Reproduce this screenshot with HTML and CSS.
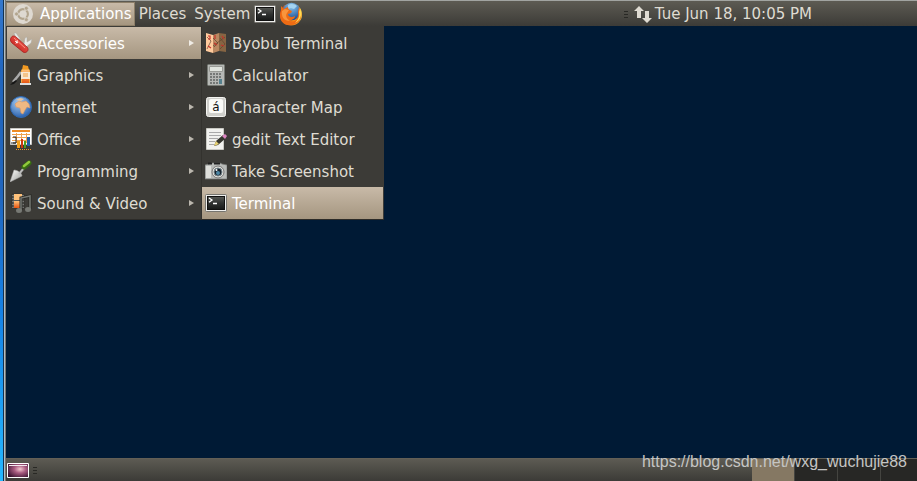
FILE: index.html
```html
<!DOCTYPE html>
<html lang="en">
<head>
<meta charset="utf-8">
<title>Desktop</title>
<link rel="stylesheet" href="styles.css">
</head>
<body>
<svg width="0" height="0" class="defs" aria-hidden="true">
  <defs>
    <linearGradient id="screen" x1="0" y1="0" x2="0" y2="1"><stop offset="0" stop-color="#555753"/><stop offset=".5" stop-color="#303231"/><stop offset="1" stop-color="#171918"/></linearGradient>
    <linearGradient id="orange" x1="0" y1="0" x2="0" y2="1"><stop offset="0" stop-color="#ffc27a"/><stop offset="1" stop-color="#e85410"/></linearGradient>
    <linearGradient id="steel" x1="0" y1="0" x2="1" y2="1"><stop offset="0" stop-color="#fff"/><stop offset="1" stop-color="#999b96"/></linearGradient>
    <linearGradient id="red" x1="1" y1="0" x2="0" y2="1"><stop offset="0" stop-color="#ff7465"/><stop offset="1" stop-color="#b60b0b"/></linearGradient>
    <radialGradient id="globe" cx=".4" cy=".3" r=".7"><stop offset="0" stop-color="#a9d0f5"/><stop offset="1" stop-color="#2c62ae"/></radialGradient>
    <radialGradient id="sky" cx=".5" cy=".2" r=".8"><stop offset="0" stop-color="#8cc6ee"/><stop offset="1" stop-color="#174b92"/></radialGradient>
    <linearGradient id="fire" x1="0" y1="0" x2="1" y2="0"><stop offset="0" stop-color="#d8420e"/><stop offset=".6" stop-color="#f58a16"/><stop offset="1" stop-color="#ffd94a"/></linearGradient>
    <radialGradient id="aurora" cx=".6" cy=".4" r=".7"><stop offset="0" stop-color="#f3c9d0"/><stop offset=".4" stop-color="#a85b80"/><stop offset="1" stop-color="#35102d"/></radialGradient>
    <symbol id="terminal" viewBox="0 0 22 22">
      <rect x=".5" y="2.500" width="21" height="17" rx="1" fill="#eeeeec" stroke="#77756f"/>
      <rect x="2.500" y="4.500" width="17" height="13" fill="url(#screen)" stroke="#111"/>
      <path d="M4 6l3 2-3 2.200M8 11.500h4" fill="none" stroke="#fff" stroke-width="1.300"/>
    </symbol>
  </defs>
</svg>
<div class="screen">
  <div class="edge"></div>
  <div class="session">
    <header class="panel top">
      <nav class="menubar">
        <button class="root active" type="button">
          <svg class="logo" viewBox="0 0 20 20"><circle cx="10" cy="10" r="10" fill="#ded9d1"/><circle cx="10" cy="10" r="4.800" fill="none" stroke="#b2a58e" stroke-width="2.400"/><g stroke="#ded9d1" stroke-width="1.200"><path d="M10 10h-7M10 10l4-7M10 10l4 7"/></g><circle cx="10" cy="10" r="3.500" fill="#ded9d1"/><g fill="#b2a58e" stroke="#ded9d1" stroke-width=".7"><circle cx="3.500" cy="10" r="2"/><circle cx="13.300" cy="4.300" r="2"/><circle cx="13.300" cy="15.700" r="2"/></g></svg>
          Applications</button>
        <button class="root" type="button">Places</button>
        <button class="root" type="button">System</button>
      </nav>
      <button class="launcher" type="button" aria-label="Terminal"><svg class="icon" viewBox="0 0 22 22"><use href="#terminal"/></svg></button>
      <button class="launcher" type="button" aria-label="Firefox"><svg class="fox" viewBox="0 0 24 24"><circle cx="12" cy="12.500" r="11" fill="url(#fire)"/><circle cx="12.500" cy="9.500" r="8.800" fill="url(#sky)"/><path d="M9 3c3-2 7-1 9 1l-3 3-3-1-3 1z" fill="#a4d3f1"/><path d="M2 4l3 3 4-2c0 2 1 3 4 4l-1 2-3 1c0 3 4 4 7 2 0 3-4 5-7 4 5 4 11 0 10-8l1-5c5 8 2 17-8 18C3 24-1 16 2 9z" fill="#ee6b14"/><path d="M21 6c3 7 0 13-5 15 3-3 5-7 4-11z" fill="#ffdc55"/><path d="M3 9l3-2 4 1-2 3c-2 3 0 6 3 8-6 0-9-4-8-10z" fill="#f9953c"/></svg></button>
      <div class="status">
        <span class="grip"></span>
        <svg class="network" viewBox="0 0 18 17"><path d="M5 0l5 5H7v7H3V5H0zM11 5h4v7h3l-5 5-5-5h3z" fill="#dfdbd2"/></svg>
        <time>Tue Jun 18, 10:05 PM</time>
      </div>
    </header>
    <main class="desktop">
      <div class="menus">
        <ul class="menu categories">
          <li><button class="item active" type="button"><svg class="icon" viewBox="0 0 22 22"><path d="M6 6L4 1l2 0 5 7zM14 12l1-6 2-1v5l5-3-1 4-5 4" fill="#e9e9e6" stroke="#aaa8a2" stroke-width=".5"/><path d="M1 6c1-3 4-2 5-1l11 10c3 3-1 7-4 5L2 11C0 9 0 7 1 6z" fill="url(#red)" stroke="#a01515" stroke-width=".7"/><path d="M4 6l11 10" stroke="#ff8c7c"/><path d="M5 9l3 2M7.500 8.500l-1.500 3" stroke="#fff"/></svg><span>Accessories</span><i class="arrow"></i></button></li>
          <li><button class="item" type="button"><svg class="icon" viewBox="0 0 22 22"><path d="M3 18l5-6 3-4" fill="none" stroke="#aaa" stroke-width="2.500"/><path d="M0 21l3-3 3-2 1 1-3 3z" fill="#151515"/><path d="M12 6l1-5 5 1 1 4" fill="#f39a21"/><rect x="11.500" y="5.500" width="8" height="14" rx="1" fill="url(#orange)" stroke="#f5ac42"/><path d="M11 8h9v7h-9z" fill="#f8e7d3"/><path d="M13 10h5M13 12h5" stroke="#ef9f42"/><path d="M10 19h11v2H10z" fill="#ddd"/></svg><span>Graphics</span><i class="arrow"></i></button></li>
          <li><button class="item" type="button"><svg class="icon" viewBox="0 0 22 22"><circle cx="11" cy="11" r="10.500" fill="url(#globe)" stroke="#2e69b3"/><path d="M6 7l3-2 3 1 4-1 3 3 1 4-3-1-2 3-2 4-2-1-1-5-4-1-1-3z" fill="#f0b983" stroke="#d99765" stroke-width=".6"/><path d="M6 4l4-2 4 1-3 2z" fill="#e7c59f"/></svg><span>Internet</span><i class="arrow"></i></button></li>
          <li><button class="item" type="button"><svg class="icon" viewBox="0 0 22 22"><path d="M.5.500h21v16H.5z" fill="#fff" stroke="#c8c6c2"/><path d="M2 2h18v2H2z" fill="#ee8b22"/><path d="M2 6.500h18M2 9.500h18M2 12.500h18M6.500 5v10M11.500 5v10M16.500 5v10" stroke="#efa24f"/><path d="M3 9h3v6H3M1 15h5" stroke="#222" fill="none"/><path d="M7 13h3v7H7z" fill="#f5a01b"/><path d="M11 11h2v9h-2z" fill="#ce3810"/><path d="M14 13h2v7h-2z" fill="#4c9d20"/><path d="M17 9h3v9h-3z" fill="#235da5"/><path d="M6 21.500h15" stroke="#e99436" stroke-dasharray="1 1"/></svg><span>Office</span><i class="arrow"></i></button></li>
          <li><button class="item" type="button"><svg class="icon" viewBox="0 0 22 22"><path d="M0 22l4-12c3 0 8 3 8 6z" fill="url(#steel)" stroke="#aaa" stroke-width=".5"/><path d="M9 14l5-6" stroke="#bbb" stroke-width="2"/><path d="M14 7l5-4" stroke="#376b12" stroke-width="5" stroke-linecap="round"/><path d="M14 6l5-4" stroke="#91c83c" stroke-width="2.500" stroke-linecap="round"/></svg><span>Programming</span><i class="arrow"></i></button></li>
          <li><button class="item" type="button"><svg class="icon" viewBox="0 0 22 22"><path d="M2 2h12v14H2z" fill="#555753" stroke="#30302d"/><path d="M4 2h8v6H4z" fill="#ffc27b"/><path d="M4 9h8v7H4z" fill="url(#orange)"/><path d="M3 3v13M13 3v13" stroke="#aaa" stroke-dasharray="1 2"/><path d="M11 18V6l9-2v13" fill="none" stroke="#272825" stroke-width="3"/><path d="M11 18V6l9-2v13" fill="none" stroke="#777974" stroke-width="1.500"/><ellipse cx="9" cy="18.500" rx="3" ry="2.500" fill="#777974"/><ellipse cx="18" cy="17.500" rx="3" ry="2.500" fill="#777974"/></svg><span>Sound &amp; Video</span><i class="arrow"></i></button></li>
        </ul>
        <ul class="menu programs">
          <li><button class="item" type="button"><svg class="icon" viewBox="0 0 22 22"><path d="M1 1l7 2v18l-7-2z" fill="#ffcb9e"/><path d="M8 3l6-2v18l-6 2z" fill="#b98861"/><path d="M14 1l7 1v18l-7-1z" fill="#866543"/><path d="M2 5l4 4-4 8M8 6l5 5-4 4M15 6l5 6-5 5M8 14l12-9" fill="none" stroke="#62442e" stroke-width=".7"/><path d="M3 4h2v3H3M10 3v4M17 4l2 3M3 14l3 2M9 11l3 2M16 13l3 1" fill="none" stroke="#c5332a" stroke-width="1.200"/></svg><span>Byobu Terminal</span></button></li>
          <li><button class="item" type="button"><svg class="icon" viewBox="0 0 22 22"><rect x="2.500" y=".5" width="17" height="21" rx="1" fill="#b6b8b5" stroke="#777a74"/><path d="M4.500 2.500h13v5h-13z" fill="#e1e5df" stroke="#999b96"/><path d="M5 10h12M5 13h12M5 16h12M5 19h12" stroke="#767977" stroke-width="2" stroke-dasharray="2 1"/><path d="M14 15h3v5h-3z" fill="#56818e"/></svg><span>Calculator</span></button></li>
          <li><button class="item" type="button"><svg class="icon" viewBox="0 0 22 22"><rect x="1.500" y="1.500" width="19" height="19" rx="2" fill="#d0d0cc" stroke="#f4f4f1"/><rect x="4" y="3" width="14" height="14" rx="2" fill="#fafaf7"/><text x="11" y="15" class="keycap">á</text></svg><span>Character Map</span></button></li>
          <li><button class="item" type="button"><svg class="icon" viewBox="0 0 22 22"><path d="M1.500.500h17v21h-17z" fill="#f2f2ef" stroke="#c9c9c3"/><path d="M4 4.500h12M4 7.500h12M4 10.500h9M4 13.500h6M4 16.500h5" stroke="#aaa"/><path d="M9 18l2-5 7-6 3 3-8 7z" fill="#35352e"/><path d="M9 18l2-5 3 3z" fill="#e8d273"/><path d="M17 8l3-2 2 2-2 3z" fill="#db84c0"/></svg><span>gedit Text Editor</span></button></li>
          <li><button class="item" type="button"><svg class="icon" viewBox="0 0 22 22"><path d="M0 5l4-1 3-1h8l2 1 5 1v14H0z" fill="#b9bbb8" stroke="#777975" stroke-width=".7"/><path d="M3 3.500h4M9 3.500h6" stroke="#222" stroke-width="2"/><path d="M1 6h5v12H1z" fill="#dedfdb"/><circle cx="13" cy="12" r="6" fill="#deded9" stroke="#777"/><circle cx="13" cy="12" r="4" fill="#18222b" stroke="#75848b"/><circle cx="13" cy="13" r="2" fill="#4c86a5"/><circle cx="11.500" cy="10" r="1" fill="#fff"/></svg><span>Take Screenshot</span></button></li>
          <li><button class="item active" type="button"><svg class="icon" viewBox="0 0 22 22"><use href="#terminal"/></svg><span>Terminal</span></button></li>
        </ul>
      </div>
    </main>
    <footer class="panel bottom">
      <button class="show-desktop" type="button" aria-label="Show desktop"><svg viewBox="0 0 22 15"><path d="M.5.500h21v14H.5z" fill="url(#aurora)" stroke="#fff"/><path d="M2 2.500h18" stroke="#f2e9ef"/></svg></button>
      <span class="grip"></span>
      <div class="workspaces"><span class="current"></span><span></span><span></span><span></span></div>
      <div class="watermark">https://blog.csdn.net/wxg_wuchujie88</div>
    </footer>
  </div>
</div>
</body>
</html>
```
FILE: styles.css
```css
* { box-sizing: border-box; }
body {
  margin: 0;
  font: 15px/20px "DejaVu Sans", sans-serif;
  color: #dfdbd2;
  background: #001a35;
}
button {
  font: inherit;
  color: inherit;
  background: none;
  border: 0;
  padding: 0;
  margin: 0;
}
svg { display: block; flex: none; }
.defs { position: absolute; }
.screen { display: flex; height: 100vh; }
.edge {
  flex: 0 0 6px;
  background:
    linear-gradient(90deg, transparent 3px, #15334f 3px 4px, #b1bdc5 4px 5px, #777873 5px),
    linear-gradient(#3478cd, #2166bf 15%, #2166bf 40%, #1682e5 65%, #25b8ff);
}
.session { flex: 1; display: flex; flex-direction: column; min-width: 0; }
.panel { display: flex; align-items: center; flex: none; background: linear-gradient(#5d5b53, #3c3b37); }
.top { height: 26px; padding-top: 1px; border-top: 1px solid #a1a4a1; }
.menubar { display: flex; align-self: stretch; }
.root { display: flex; align-items: center; padding: 0 4px; gap: 7px; }
.menubar .root.active { border: 1px solid #8d7f69; padding: 0 2px 0 6px; }
.active { color: #fff; background: linear-gradient(#c8baa8, #a59680); }
.logo { width: 20px; height: 20px; }
.launcher { margin-right: 3px; }
.icon { width: 22px; height: 22px; }
.fox { width: 24px; height: 24px; }
.status { display: flex; align-items: center; margin-left: auto; margin-right: 105px; }
.grip { width: 4px; height: 7px; background: repeating-linear-gradient(#292925 0 1px, transparent 1px 3px); }
.network { width: 18px; height: 17px; margin: 0 3px 0 6px; }
.desktop { flex: 1; position: relative; background: #001a35; }
.menus { position: absolute; top: 0; left: 0; display: flex; }
.menu { list-style: none; margin: 0; padding: 1px 0 0 1px; background: #3c3b37; border-bottom: 1px solid #2c2b28; }
.categories { width: 195px; }
.programs { width: 183px; padding-right: 1px; border-left: 1px solid #33322e; padding-left: 0; }
.item { display: flex; align-items: center; gap: 5px; width: 100%; height: 32px; padding: 0 7px 0 3px; text-align: left; white-space: nowrap; }
.item span { padding-top: 2px; }
.arrow { margin-left: auto; border: solid transparent; border-width: 3px 0 3px 5px; border-left-color: #bbb7ae; }
.active .arrow { border-left-color: #f0ece5; }
.keycap { font: 12px "DejaVu Sans", sans-serif; text-anchor: middle; fill: #111; }
.bottom { position: relative; height: 23px; border-top: 1px solid #625f56; }
.show-desktop { padding: 0 4px 0 1px; }
.show-desktop svg { width: 22px; height: 15px; }
.workspaces { display: flex; align-self: stretch; gap: 1px; margin-left: auto; background: #444440; }
.workspaces span { width: 42px; background: #272725; }
.workspaces span:last-child { width: 36px; }
.workspaces .current { background: #857863; }
.watermark { position: absolute; right: 10px; top: -8px; font: 16px/22px "Liberation Sans", sans-serif; color: #c4c5c4; }
```
